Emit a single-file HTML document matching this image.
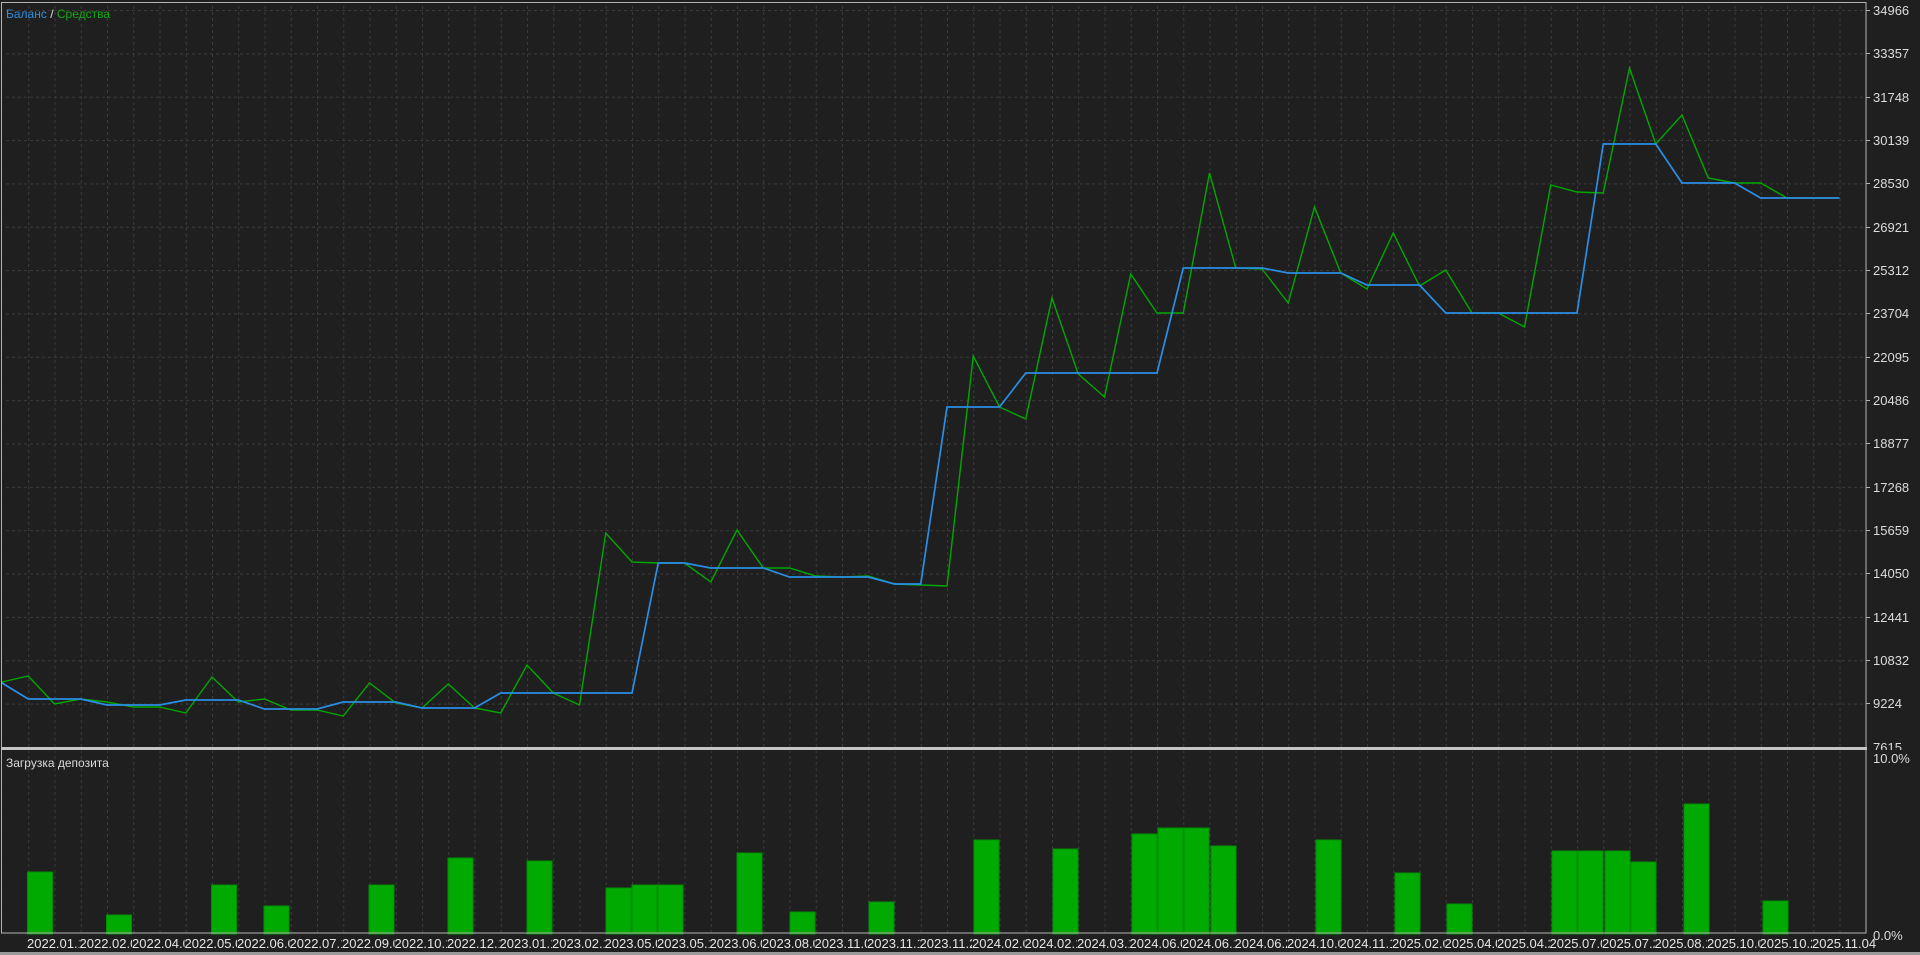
<!DOCTYPE html>
<html><head><meta charset="utf-8"><style>
html,body{margin:0;padding:0;background:#1f1f1f;width:1920px;height:955px;overflow:hidden}
svg{display:block}
text{font-family:"Liberation Sans","DejaVu Sans",sans-serif}
</style></head><body>
<svg width="1920" height="955" viewBox="0 0 1920 955" xmlns="http://www.w3.org/2000/svg">
<defs>
<pattern id="pv" patternUnits="userSpaceOnUse" x="2" y="0" width="26.25" height="6">
<rect x="0" y="0" width="1" height="3" fill="#3a3a3a"/>
</pattern>
<pattern id="ph" patternUnits="userSpaceOnUse" x="0" y="10" width="6" height="43.35">
<rect x="0" y="0" width="3" height="1" fill="#3a3a3a"/>
</pattern>
<clipPath id="cm"><rect x="1" y="2" width="1865" height="746"/></clipPath>
</defs>
<rect width="1920" height="955" fill="#1f1f1f"/>
<!-- grids -->
<rect x="3" y="3" width="1862" height="745" fill="url(#pv)"/>
<rect x="3" y="3" width="1862" height="745" fill="url(#ph)"/>
<rect x="3" y="751" width="1862" height="183" fill="url(#pv)"/>
<!-- axis labels main -->
<g fill="#dcdcdc" font-size="13">
<text x="1873" y="15">34966</text>
<text x="1873" y="58">33357</text>
<text x="1873" y="102">31748</text>
<text x="1873" y="145">30139</text>
<text x="1873" y="188">28530</text>
<text x="1873" y="232">26921</text>
<text x="1873" y="275">25312</text>
<text x="1873" y="318">23704</text>
<text x="1873" y="362">22095</text>
<text x="1873" y="405">20486</text>
<text x="1873" y="448">18877</text>
<text x="1873" y="492">17268</text>
<text x="1873" y="535">15659</text>
<text x="1873" y="578">14050</text>
<text x="1873" y="622">12441</text>
<text x="1873" y="665">10832</text>
<text x="1873" y="708">9224</text>
<text x="1873" y="752">7615</text>
</g>
<rect x="1867" y="750" width="53" height="14" fill="#1f1f1f"/>
<g stroke="#b4b4b4" stroke-width="1">
<line x1="1866" y1="10.5" x2="1870" y2="10.5"/><line x1="1866" y1="53.5" x2="1870" y2="53.5"/><line x1="1866" y1="97.5" x2="1870" y2="97.5"/><line x1="1866" y1="140.5" x2="1870" y2="140.5"/><line x1="1866" y1="183.5" x2="1870" y2="183.5"/><line x1="1866" y1="227.5" x2="1870" y2="227.5"/><line x1="1866" y1="270.5" x2="1870" y2="270.5"/><line x1="1866" y1="313.5" x2="1870" y2="313.5"/><line x1="1866" y1="357.5" x2="1870" y2="357.5"/><line x1="1866" y1="400.5" x2="1870" y2="400.5"/><line x1="1866" y1="443.5" x2="1870" y2="443.5"/><line x1="1866" y1="487.5" x2="1870" y2="487.5"/><line x1="1866" y1="530.5" x2="1870" y2="530.5"/><line x1="1866" y1="573.5" x2="1870" y2="573.5"/><line x1="1866" y1="617.5" x2="1870" y2="617.5"/><line x1="1866" y1="660.5" x2="1870" y2="660.5"/><line x1="1866" y1="703.5" x2="1870" y2="703.5"/>
</g>
<text x="1873" y="763" fill="#dcdcdc" font-size="13">10.0%</text>
<text x="1873" y="940" fill="#dcdcdc" font-size="13">0.0%</text>
<!-- lines -->
<g clip-path="url(#cm)" fill="none" stroke-linejoin="miter">
<polyline stroke="#00a800" stroke-width="1.4" points="2,682 28.25,676 54.5,704 80.75,699 107,702 133.25,707 159.5,707 185.75,713 212,677 238.25,702 264.5,699 290.75,710 317,710 343.25,716 369.5,683 395.75,703 422,708 448.25,684 474.5,708 500.75,713 527,665 553.25,693 579.5,705 605.75,533 632,562 658.25,563 684.5,563 710.75,582 737,530 763.25,568 789.5,568 815.75,576 842,577 868.25,576 894.5,584 920.75,585 947,586 973.25,356 999.5,407 1025.75,419 1052,298 1078.25,374 1104.5,397 1130.75,274 1157,313 1183.25,313 1209.5,173 1235.75,268 1262,269 1288.25,303 1314.5,207 1340.75,273 1367,289 1393.25,233 1419.5,286 1445.75,270 1472,313 1498.25,313 1524.5,327 1550.75,185 1577,192 1603.25,193 1629.5,68 1655.75,144 1682,115 1708.25,178 1734.5,183 1760.75,183 1787,198 1813.25,198 1839.5,198"/>
<polyline stroke="#2a8ee6" stroke-width="1.7" points="2,683 28.25,699 80.75,699 107,705 159.5,705 185.75,700 238.25,700 264.5,709 317,709 343.25,702 395.75,702 422,708 474.5,708 500.75,693 632,693 658.25,563 684.5,563 710.75,568 763.25,568 789.5,577 868.25,577 894.5,584 920.75,584 947,407 999.5,407 1025.75,373 1157,373 1183.25,268 1262,268 1288.25,273 1340.75,273 1367,285 1419.5,285 1445.75,313 1577,313 1603.25,144 1655.75,144 1682,183 1734.5,183 1760.75,198 1839.5,198"/>
</g>
<!-- bars -->
<g fill="#00aa00" stroke="#009000" stroke-width="1">
<rect x="27.5" y="872" width="25" height="62"/>
<rect x="106.5" y="915" width="25" height="19"/>
<rect x="211.5" y="885" width="25" height="49"/>
<rect x="264" y="906" width="25" height="28"/>
<rect x="369" y="885" width="25" height="49"/>
<rect x="448" y="858" width="25" height="76"/>
<rect x="527" y="861" width="25" height="73"/>
<rect x="606" y="888" width="25" height="46"/>
<rect x="632" y="885" width="25" height="49"/>
<rect x="658" y="885" width="25" height="49"/>
<rect x="737" y="853" width="25" height="81"/>
<rect x="790" y="912" width="25" height="22"/>
<rect x="869" y="902" width="25" height="32"/>
<rect x="974" y="840" width="25" height="94"/>
<rect x="1053" y="849" width="25" height="85"/>
<rect x="1132" y="834" width="25" height="100"/>
<rect x="1158" y="828" width="25" height="106"/>
<rect x="1184" y="828" width="25" height="106"/>
<rect x="1211" y="846" width="25" height="88"/>
<rect x="1316" y="840" width="25" height="94"/>
<rect x="1395" y="873" width="25" height="61"/>
<rect x="1447" y="904" width="25" height="30"/>
<rect x="1552" y="851" width="25" height="83"/>
<rect x="1578" y="851" width="25" height="83"/>
<rect x="1605" y="851" width="25" height="83"/>
<rect x="1631" y="862" width="25" height="72"/>
<rect x="1684" y="804" width="25" height="130"/>
<rect x="1763" y="901" width="25" height="33"/>
</g>
<!-- frames -->
<rect x="1.5" y="2.5" width="1864.5" height="930.5" fill="none" stroke="#b4b4b4" stroke-width="1"/>
<rect x="1" y="747" width="1866" height="3" fill="#c4c4c4"/>
<rect x="0" y="952" width="1920" height="3" fill="#9a9a9a"/>
<!-- titles -->
<text x="6" y="18" font-size="12"><tspan fill="#2e8ee0">Баланс</tspan><tspan fill="#e0e0e0"> / </tspan><tspan fill="#14a814">Средства</tspan></text>
<text x="6" y="767" font-size="12" fill="#dcdcdc">Загрузка депозита</text>
<!-- x labels -->
<g fill="#e6e6e6" font-size="13">
<svg x="27" y="934" width="52.5" height="18"><text x="0" y="14">2022.01.10</text></svg>
<svg x="79.5" y="934" width="52.5" height="18"><text x="0" y="14">2022.02.07</text></svg>
<svg x="132" y="934" width="52.5" height="18"><text x="0" y="14">2022.04.04</text></svg>
<svg x="184.5" y="934" width="52.5" height="18"><text x="0" y="14">2022.05.02</text></svg>
<svg x="237" y="934" width="52.5" height="18"><text x="0" y="14">2022.06.06</text></svg>
<svg x="289.5" y="934" width="52.5" height="18"><text x="0" y="14">2022.07.11</text></svg>
<svg x="342" y="934" width="52.5" height="18"><text x="0" y="14">2022.09.05</text></svg>
<svg x="394.5" y="934" width="52.5" height="18"><text x="0" y="14">2022.10.10</text></svg>
<svg x="447" y="934" width="52.5" height="18"><text x="0" y="14">2022.12.12</text></svg>
<svg x="499.5" y="934" width="52.5" height="18"><text x="0" y="14">2023.01.16</text></svg>
<svg x="552" y="934" width="52.5" height="18"><text x="0" y="14">2023.02.13</text></svg>
<svg x="604.5" y="934" width="52.5" height="18"><text x="0" y="14">2023.05.01</text></svg>
<svg x="657" y="934" width="52.5" height="18"><text x="0" y="14">2023.05.15</text></svg>
<svg x="709.5" y="934" width="52.5" height="18"><text x="0" y="14">2023.06.05</text></svg>
<svg x="762" y="934" width="52.5" height="18"><text x="0" y="14">2023.08.07</text></svg>
<svg x="814.5" y="934" width="52.5" height="18"><text x="0" y="14">2023.11.06</text></svg>
<svg x="867" y="934" width="52.5" height="18"><text x="0" y="14">2023.11.13</text></svg>
<svg x="919.5" y="934" width="52.5" height="18"><text x="0" y="14">2023.11.27</text></svg>
<svg x="972" y="934" width="52.5" height="18"><text x="0" y="14">2024.02.05</text></svg>
<svg x="1024.5" y="934" width="52.5" height="18"><text x="0" y="14">2024.02.19</text></svg>
<svg x="1077" y="934" width="52.5" height="18"><text x="0" y="14">2024.03.11</text></svg>
<svg x="1129.5" y="934" width="52.5" height="18"><text x="0" y="14">2024.06.03</text></svg>
<svg x="1182" y="934" width="52.5" height="18"><text x="0" y="14">2024.06.10</text></svg>
<svg x="1234.5" y="934" width="52.5" height="18"><text x="0" y="14">2024.06.24</text></svg>
<svg x="1287" y="934" width="52.5" height="18"><text x="0" y="14">2024.10.07</text></svg>
<svg x="1339.5" y="934" width="52.5" height="18"><text x="0" y="14">2024.11.11</text></svg>
<svg x="1392" y="934" width="52.5" height="18"><text x="0" y="14">2025.02.03</text></svg>
<svg x="1444.5" y="934" width="52.5" height="18"><text x="0" y="14">2025.04.07</text></svg>
<svg x="1497" y="934" width="52.5" height="18"><text x="0" y="14">2025.04.21</text></svg>
<svg x="1549.5" y="934" width="52.5" height="18"><text x="0" y="14">2025.07.07</text></svg>
<svg x="1602" y="934" width="52.5" height="18"><text x="0" y="14">2025.07.21</text></svg>
<svg x="1654.5" y="934" width="52.5" height="18"><text x="0" y="14">2025.08.11</text></svg>
<svg x="1707" y="934" width="52.5" height="18"><text x="0" y="14">2025.10.06</text></svg>
<svg x="1759.5" y="934" width="52.5" height="18"><text x="0" y="14">2025.10.20</text></svg>
<text x="1812" y="948">2025.11.04</text>
</g>
</svg>
</body></html>
